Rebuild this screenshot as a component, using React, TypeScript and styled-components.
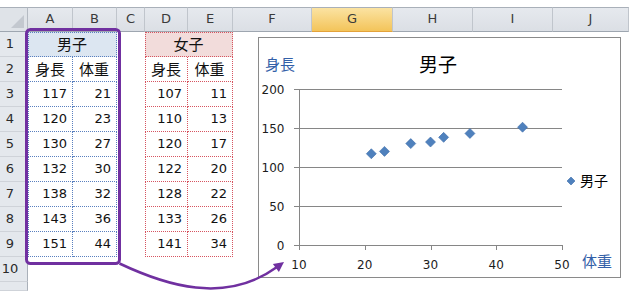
import * as React from 'react';
import styled, { createGlobalStyle, css } from 'styled-components';

const GlobalStyle = createGlobalStyle`
html, body {
  margin: 0;
  padding: 0;
  background: #ffffff;
}
body {
  width: 640px;
  height: 291px;
  overflow: hidden;
  font-family: "DejaVu Sans", "Noto Sans CJK JP", sans-serif;
  color: #111;
}
`;

const Sheet = styled('div')`
position: relative;
width: 640px;
height: 291px;
padding-top: 7px;
box-sizing: border-box;
display: grid;
grid-template-columns: 28px 45px 44px 28px 43px 45px 79px 81px 80px 80px 76px 1fr;
grid-template-rows: 25px repeat(10, 25px) 1fr;
`;

const Corner = styled('div')`
position: relative;
box-sizing: border-box;
background: #dfe3e8;
border-top: 1px solid #a9b0b9;
border-right: 1px solid #b4bac2;
border-bottom: 1px solid #9ea6b0;
&::after {
  content: '';
  position: absolute;
  right: 3px;
  bottom: 3px;
  border-style: solid;
  border-width: 0 0 13px 13px;
  border-color: transparent transparent #c3c8cf transparent;
}
`;

const ColHead = styled('div')`
box-sizing: border-box;
display: flex;
align-items: center;
justify-content: center;
font-size: 13px;
color: #3a3a3a;
padding-bottom: 2px;
background: linear-gradient(#e6e9ee, #dbdfe5);
border-top: 1px solid #a9b0b9;
border-right: 1px solid #c0c5cc;
border-bottom: 1px solid #9ea6b0;
${(props) =>
  props.$selected &&
  css`
  background: linear-gradient(#fbe3a2, #f3c45a);
  border-bottom: 1px solid #e3a23a;
`}
${(props) =>
  props.$blank &&
  css`
  background: #ffffff;
  border: none;
`}
`;

const RowHead = styled('div')`
box-sizing: border-box;
display: flex;
align-items: center;
justify-content: center;
padding: 0 7px 2px 0;
font-size: 13px;
color: #2a2a2a;
background: #e4e8ed;
border-right: 1px solid #a9b0b9;
border-bottom: 1px solid #cfd3d9;
`;

const toneColor = { men: '#5a80bf', women: '#d65560' };

const Cell = styled('div')`
box-sizing: border-box;
display: flex;
align-items: center;
justify-content: ${(props) => (props.$align === 'right' ? 'flex-end' : 'center')};
padding: 0 5px 2px 4px;
font-size: ${(props) => (props.$cjk ? '15px' : '13px')};
background: ${(props) => props.$fill || 'transparent'};
grid-column: span ${(props) => props.$span || 1};
${(props) =>
  props.$tone &&
  css`
  border-right: 1px dotted ${toneColor[props.$tone]};
  border-bottom: 1px dotted ${toneColor[props.$tone]};
`}
${(props) =>
  props.$tone &&
  props.$left &&
  css`
  border-left: 1px dotted ${toneColor[props.$tone]};
`}
${(props) =>
  props.$tone &&
  props.$top &&
  css`
  border-top: 1px dotted ${toneColor[props.$tone]};
`}
`;

const ChartBox = styled('div')`
position: absolute;
left: 258px;
top: 37px;
width: 363px;
height: 241px;
box-sizing: border-box;
border: 1px solid #8a8a8a;
background: #ffffff;
`;

const ChartSvg = styled('svg')`
display: block;
font-family: "DejaVu Sans", "Noto Sans CJK JP", sans-serif;
`;

const TickLabel = styled('text')`
font-size: 12px;
fill: #1c1c1c;
`;

const ChartTitle = styled('text')`
font-size: 19px;
fill: #000000;
`;

const AxisTitle = styled('text')`
font-size: 15px;
fill: #3360a8;
`;

const LegendText = styled('text')`
font-size: 14px;
fill: #000000;
`;

const Overlay = styled('svg')`
position: absolute;
left: 0;
top: 0;
pointer-events: none;
`;

const columns = ['A', 'B', 'C', 'D', 'E', 'F', 'G', 'H', 'I', 'J'];
const men = [[117, 21], [120, 23], [130, 27], [132, 30], [138, 32], [143, 36], [151, 44]];
const women = [[107, 11], [110, 13], [120, 17], [122, 20], [128, 22], [133, 26], [141, 34]];

const xs = (v) => 299 + (v - 10) * 6.575;
const ys = (v) => 245 - v * 0.78;

function blanks(n, key) {
  return Array.from({ length: n }).map((_, i) => <Cell key={key + i} />);
}

function Diamond({ x, y, r }) {
  return (
    <polygon
      points={`${x},${y - r} ${x + r},${y} ${x},${y + r} ${x - r},${y}`}
      fill="#4f81bd"
      stroke="#3d6ca9"
      strokeWidth="0.6"
    />
  );
}

function Chart() {
  return (
    <ChartBox>
      <ChartSvg width="361" height="239" viewBox="259 38 361 239">
        <AxisTitle x="265" y="70">身長</AxisTitle>
        <ChartTitle x="438" y="72" textAnchor="middle">男子</ChartTitle>
        {[50, 100, 150, 200].map((v) => (
          <line key={v} x1="294" x2="562" y1={ys(v) + 0.5} y2={ys(v) + 0.5} stroke="#868686" strokeWidth="1" />
        ))}
        <line x1="294" x2="562" y1="245.5" y2="245.5" stroke="#868686" strokeWidth="1" />
        <line x1="299.5" x2="299.5" y1="89" y2="250" stroke="#868686" strokeWidth="1" />
        {[10, 20, 30, 40, 50].map((v) => (
          <line key={v} x1={Math.round(xs(v)) + 0.5} x2={Math.round(xs(v)) + 0.5} y1="245" y2="250" stroke="#868686" strokeWidth="1" />
        ))}
        {[0, 50, 100, 150, 200].map((v) => (
          <TickLabel key={v} x="284.5" y={ys(v) + 4.5} textAnchor="end">{v}</TickLabel>
        ))}
        {[10, 20, 30, 40, 50].map((v) => (
          <TickLabel key={v} x={xs(v)} y="269" textAnchor="middle">{v}</TickLabel>
        ))}
        {men.map(([h, w]) => (
          <Diamond key={h} x={xs(w)} y={ys(h)} r={5} />
        ))}
        <Diamond x={571} y={181} r={4} />
        <LegendText x="580" y="186">男子</LegendText>
        <AxisTitle x="582" y="267">体重</AxisTitle>
      </ChartSvg>
    </ChartBox>
  );
}

function App() {
  return (
    <>
      <GlobalStyle />
      <Sheet>
        <Corner />
        {columns.map((c) => (
          <ColHead key={c} $selected={c === 'G'}>{c}</ColHead>
        ))}
        <ColHead $blank />

        <RowHead>1</RowHead>
        <Cell $tone="men" $span={2} $left $top $fill="#dce6f1" $cjk>男子</Cell>
        <Cell />
        <Cell $tone="women" $span={2} $left $top $fill="#f2dcdb" $cjk>女子</Cell>
        {blanks(6, 'r1-')}

        <RowHead>2</RowHead>
        <Cell $tone="men" $left $cjk>身長</Cell>
        <Cell $tone="men" $cjk>体重</Cell>
        <Cell />
        <Cell $tone="women" $left $cjk>身長</Cell>
        <Cell $tone="women" $cjk>体重</Cell>
        {blanks(6, 'r2-')}

        {men.map((m, i) => (
          <React.Fragment key={i}>
            <RowHead>{i + 3}</RowHead>
            <Cell $tone="men" $left $align="right">{m[0]}</Cell>
            <Cell $tone="men" $align="right">{m[1]}</Cell>
            <Cell />
            <Cell $tone="women" $left $align="right">{women[i][0]}</Cell>
            <Cell $tone="women" $align="right">{women[i][1]}</Cell>
            {blanks(6, `r${i + 3}-`)}
          </React.Fragment>
        ))}

        <RowHead>10</RowHead>
        {blanks(11, 'r10-')}
        <RowHead />
        {blanks(11, 'r11-')}

        <Chart />

        <Overlay width="640" height="291" viewBox="0 0 640 291">
          <rect x="26.5" y="29.5" width="93" height="234" rx="4" fill="none" stroke="#7030a0" strokeWidth="3" />
          <path d="M119.5 263.5 C 165 285, 225 305, 277 267" fill="none" stroke="#7030a0" strokeWidth="2.5" />
          <polygon points="284,262 278.9,272 272.9,263.9" fill="#7030a0" />
        </Overlay>
      </Sheet>
    </>
  );
}

export default App;
